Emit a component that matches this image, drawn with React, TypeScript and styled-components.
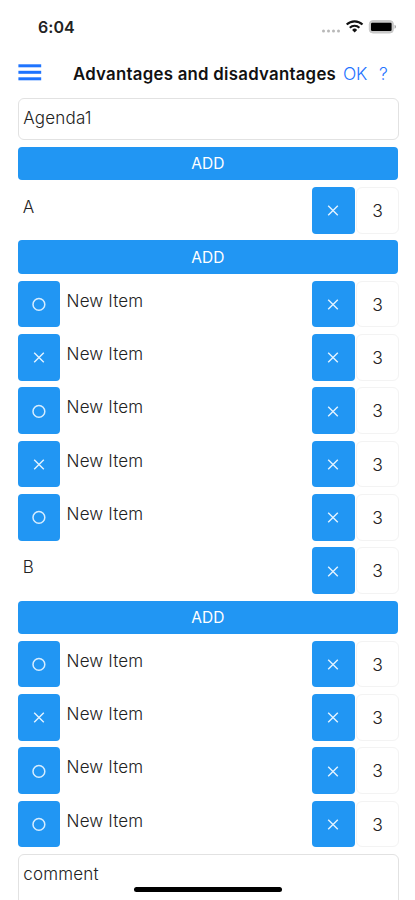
import React from "react";
import styled, { createGlobalStyle } from "styled-components";

const BLUE = "#2196f3";
const LINK = "#1f74ff";

const GlobalStyle = createGlobalStyle`
  * { box-sizing: border-box; }
  html, body { margin: 0; padding: 0; background: #fff; overflow: hidden; }
  body { font-family: Inter, "Liberation Sans", sans-serif; color: #222; }
  button { font-family: inherit; border: 0; padding: 0; margin: 0; }
`;

const Screen = styled.main`
  position: relative;
  width: 415px;
  height: 900px;
  overflow: hidden;
  background: #fff;
`;

const StatusBar = styled.div`
  display: flex;
  align-items: center;
  height: 54px;
  padding: 0 18px 0 38px;
`;

const Time = styled.span`
  flex: 1;
  font-size: 16px;
  line-height: 20px;
  font-weight: 600;
  letter-spacing: 0.05px;
  color: #222;
`;

const NavBar = styled.header`
  display: flex;
  align-items: center;
  height: 43.5px;
  padding: 0 0 3px 18px;
`;

const MenuButton = styled.button`
  display: flex;
  width: 55px;
  height: 22px;
  background: none;
`;

const Title = styled.h1`
  margin: 0;
  width: 270px;
  font-size: 16.8px;
  line-height: 22px;
  font-weight: 600;
  letter-spacing: 0.27px;
  white-space: nowrap;
  color: #111;
`;

const NavLink = styled.button<{ $width: number }>`
  width: ${(p) => p.$width}px;
  background: none;
  color: ${LINK};
  text-align: left;
  font-size: 17.5px;
  font-weight: 300;
  line-height: 22px;
  letter-spacing: -0.2px;
`;

const Content = styled.section`
  display: flex;
  flex-direction: column;
  gap: 6.7px;
  padding: 0 17px 0 17.7px;
`;

const Field = styled.div<{ $height: number }>`
  flex: none;
  height: ${(p) => p.$height}px;
  margin-right: -1px;
  padding: 9.5px 4.5px;
  border: 1.4px solid #e2e2e2;
  border-radius: 6px;
  font-size: 17px;
  line-height: 21px;
  font-weight: 300;
  letter-spacing: 0.2px;
`;

const AddButton = styled.button`
  flex: none;
  height: 33.4px;
  border-radius: 4px;
  background: ${BLUE};
  color: #fff;
  font-size: 15.5px;
  font-weight: 400;
  line-height: 33px;
`;

const Row = styled.div`
  flex: none;
  display: flex;
  height: 46.65px;
  margin-right: -1.3px;
`;

const Tile = styled.button`
  flex: none;
  display: flex;
  align-items: center;
  justify-content: center;
  width: 42.4px;
  border-radius: 4px;
  background: ${BLUE};
`;

const Glyph = styled.svg`
  display: block;
  overflow: visible;
`;

const Label = styled.span<{ $inset: number }>`
  flex: 1;
  padding: 10.2px 0 0 ${(p) => p.$inset}px;
  font-size: 17px;
  line-height: 21px;
  font-weight: 300;
  letter-spacing: 0.15px;
`;

const Score = styled.div`
  flex: none;
  width: 43.5px;
  margin-left: 1.2px;
  border: 1px solid #f3f3f3;
  border-radius: 6px;
  text-align: center;
  font-size: 17.5px;
  font-weight: 300;
  line-height: 46px;
`;

const HomeIndicator = styled.div`
  position: absolute;
  left: 134px;
  top: 886.5px;
  width: 148px;
  height: 5px;
  border-radius: 3px;
  background: #000;
`;

const Cross = () => (
  <Glyph width="14" height="14" viewBox="0 0 14 14" fill="none" stroke="#e3f3ff" strokeWidth="1.4">
    <path d="M2.2 2.7 11.8 12.3M11.8 2.7 2.2 12.3" />
  </Glyph>
);

const Circle = () => (
  <Glyph width="14" height="14" viewBox="0 0 14 14" fill="none" stroke="#d6edff" strokeWidth="1.5">
    <circle cx="6.9" cy="7.4" r="5.9" />
  </Glyph>
);

const StatusIcons = () => (
  <svg width="76" height="20" viewBox="0 0 76 20">
    <g fill="#b8b8b8">
      <circle cx="2.5" cy="14" r="1.5" />
      <circle cx="7.5" cy="14" r="1.5" />
      <circle cx="12.5" cy="14" r="1.5" />
      <circle cx="17.5" cy="14" r="1.5" />
    </g>
    <g fill="none" stroke="#111" strokeWidth="2.1">
      <path d="M25.7 7.6a11.2 11.2 0 0 1 15.8 0" />
      <path d="M28.8 10.8a6.8 6.8 0 0 1 9.6 0" />
    </g>
    <path d="M31.1 12.9a3.5 3.5 0 0 1 5 0L33.6 15.6z" fill="#111" />
    <rect x="48.3" y="3.6" width="24.1" height="12.4" rx="3.6" fill="#c8c8c8" stroke="#c8c8c8" strokeWidth="1" />
    <rect x="50" y="5.8" width="20.6" height="8.2" rx="1.2" fill="#000" />
    <path d="M73.6 7.8a2.2 2.2 0 0 1 0 4z" fill="#999" />
  </svg>
);

const Choice = ({ kind }: { kind: "o" | "x" }) => (
  <Tile>{kind === "o" ? <Circle /> : <Cross />}</Tile>
);

type Item = { kind: "o" | "x"; text: string; score: number };
type Group = { name: string; score: number; items: Item[] };

const makeItems = (kinds: string): Item[] =>
  kinds.split("").map((k) => ({ kind: k as "o" | "x", text: "New Item", score: 3 }));

const groups: Group[] = [
  { name: "A", score: 3, items: makeItems("oxoxo") },
  { name: "B", score: 3, items: makeItems("oxoo") },
];

export default function App() {
  return (
    <Screen>
      <GlobalStyle />
      <StatusBar>
        <Time>6:04</Time>
        <StatusIcons />
      </StatusBar>
      <NavBar>
        <MenuButton aria-label="Menu">
          <svg width="24" height="20" viewBox="0 0 24 20" fill={LINK}>
            <rect x="0.4" y="1.3" width="22.8" height="3" />
            <rect x="0.4" y="7.8" width="22.8" height="3" />
            <rect x="0.4" y="14.3" width="22.8" height="3" />
          </svg>
        </MenuButton>
        <Title>Advantages and disadvantages</Title>
        <NavLink $width={36}>OK</NavLink>
        <NavLink $width={20}>?</NavLink>
      </NavBar>
      <Content>
        <Field $height={42.9}>Agenda1</Field>
        <AddButton>ADD</AddButton>
        {groups.map((group) => (
          <React.Fragment key={group.name}>
            <Row>
              <Label $inset={5}>{group.name}</Label>
              <Choice kind="x" />
              <Score>{group.score}</Score>
            </Row>
            <AddButton>ADD</AddButton>
            {group.items.map((item, i) => (
              <Row key={i}>
                <Choice kind={item.kind} />
                <Label $inset={6.5}>{item.text}</Label>
                <Choice kind="x" />
                <Score>{item.score}</Score>
              </Row>
            ))}
          </React.Fragment>
        ))}
        <Field $height={80}>comment</Field>
      </Content>
      <HomeIndicator />
    </Screen>
  );
}
